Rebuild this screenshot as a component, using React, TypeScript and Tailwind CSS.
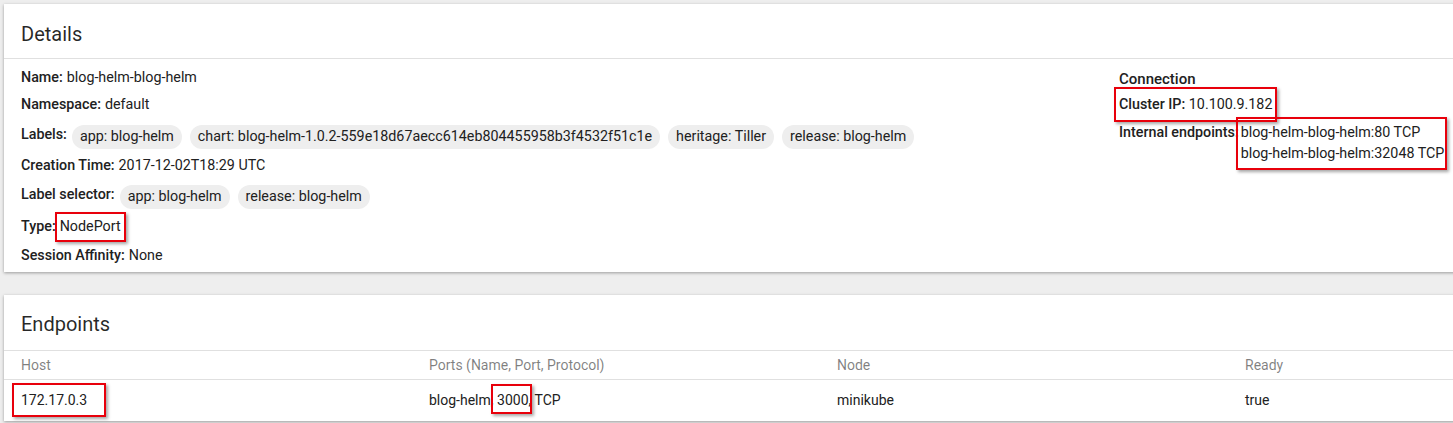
import React from 'react';

const LABELS = [
  'app: blog-helm',
  'chart: blog-helm-1.0.2-559e18d67aecc614eb804455958b3f4532f51c1e',
  'heritage: Tiller',
  'release: blog-helm',
];

const SELECTOR = ['app: blog-helm', 'release: blog-helm'];

// Red annotation box laid over a piece of text
function Mark({ className }: { className: string }) {
  return (
    <span
      className={`pointer-events-none absolute border-2 border-[#e8000b] shadow-[2px_2px_3px_rgba(0,0,0,0.35)] ${className}`}
    />
  );
}

function Chip({ text }: { text: string }) {
  return (
    <span className="inline-flex h-6 items-center rounded-xl bg-[#eeeeee] px-[8px] text-[14.3px] text-[#212121]">
      {text}
    </span>
  );
}

function Field({ label, children, className = '' }: { label: string; children: React.ReactNode; className?: string }) {
  return (
    <div className={`flex items-center text-[14.3px] text-[#212121] ${className}`}>
      <span className="font-medium mr-1">{label}</span>
      {children}
    </div>
  );
}

export default function App() {
  return (
    <div className="w-[1453px] h-[423px] overflow-hidden bg-[#eeeeee] font-['Roboto',sans-serif]">
      <div className="pl-[4px] pt-[4px] flex flex-col gap-[23px]">
        {/* Details card */}
        <div className="w-[1640px] bg-white shadow-[0_1px_3px_rgba(0,0,0,0.35)]">
          <div className="h-[55px] flex items-center px-[17px] pt-[5px] border-b border-[#e0e0e0]">
            <span className="text-[20px] text-black/85">Details</span>
          </div>
          <div className="flex pt-[4px] pb-[3px] px-[17px]">
            <div className="w-[1098px] flex flex-col">
              <Field label="Name:" className="h-[28px] pt-[2px]">blog-helm-blog-helm</Field>
              <Field label="Namespace:" className="h-[28px]">default</Field>
              <div className="h-[33px] pt-[3px] flex items-center text-[14.3px] text-[#212121]">
                <span className="font-medium mr-[5px] -mt-[5px]">Labels:</span>
                <div className="flex gap-[8px]">
                  {LABELS.map((l) => (
                    <Chip key={l} text={l} />
                  ))}
                </div>
              </div>
              <Field label="Creation Time:" className="h-[28px]">2017-12-02T18:29 UTC</Field>
              <div className="h-[32px] pt-[2px] flex items-center text-[14.3px] text-[#212121]">
                <span className="font-medium mr-[5px] -mt-[5px]">Label selector:</span>
                <div className="flex gap-[8px]">
                  {SELECTOR.map((l) => (
                    <Chip key={l} text={l} />
                  ))}
                </div>
              </div>
              <div className="h-[30px] flex items-center text-[14.3px] text-[#212121]">
                <span className="font-medium">Type:</span>
                <span className="relative pl-[4px]">
                  NodePort
                  <Mark className="-left-[1px] -right-[5px] -top-[4px] -bottom-[4px]" />
                </span>
              </div>
              <Field label="Session Affinity:" className="h-[27px]">None</Field>
            </div>
            <div className="flex flex-col text-[14.3px] text-[#212121]">
              <div className="h-[29px] flex items-center text-[15px] font-medium pt-[3px]">Connection</div>
              <div className="h-[26px] flex items-center">
                <span className="relative">
                  <span className="font-medium">Cluster IP:</span> 10.100.9.182
                  <Mark className="-left-[5px] -right-[5px] -top-[7px] -bottom-[6px]" />
                </span>
              </div>
              <div className="flex pt-[4px]">
                <span className="font-medium mr-[2px] leading-[21px]">Internal endpoints:</span>
                <span className="relative flex flex-col leading-[21px]">
                  <span>blog-helm-blog-helm:80 TCP</span>
                  <span>blog-helm-blog-helm:32048 TCP</span>
                  <Mark className="-left-[5px] -right-[3px] -top-[5px] -bottom-[6px]" />
                </span>
              </div>
            </div>
          </div>
        </div>

        {/* Endpoints card */}
        <div className="w-[1640px] bg-white shadow-[0_1px_3px_rgba(0,0,0,0.35)]">
          <div className="h-[56px] flex items-center px-[17px] pt-[3px] border-b border-[#e0e0e0]">
            <span className="text-[20px] text-black/85">Endpoints</span>
          </div>
          <div className="grid grid-cols-[408px_408px_408px_408px] pl-[17px] h-[29px] pt-[1px] items-center border-b border-[#e0e0e0] text-[14px] text-black/50">
            <span>Host</span>
            <span>Ports (Name, Port, Protocol)</span>
            <span>Node</span>
            <span>Ready</span>
          </div>
          <div className="grid grid-cols-[408px_408px_408px_408px] pl-[17px] h-[41px] items-center text-[14px] text-[#212121]">
            <span className="relative justify-self-start">
              172.17.0.3
              <Mark className="-left-[9px] -right-[19px] -top-[7px] -bottom-[6px]" />
            </span>
            <span>
              blog-helm,{' '}
              <span className="relative">
                3000,
                <Mark className="-left-[6px] -right-[1px] -top-[8px] -bottom-[6px]" />
              </span>{' '}
              TCP
            </span>
            <span>minikube</span>
            <span>true</span>
          </div>
        </div>
      </div>
    </div>
  );
}
